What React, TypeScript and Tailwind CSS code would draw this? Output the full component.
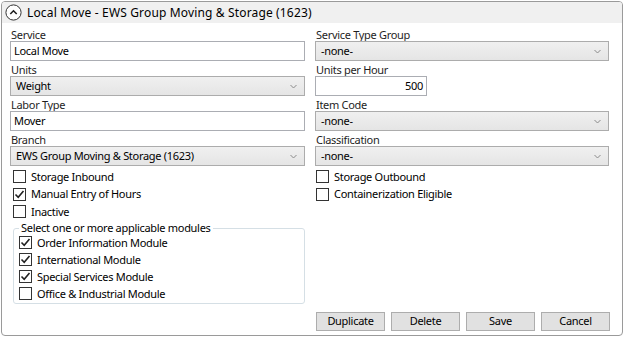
import React from "react";

const font = { fontFamily: '"Noto Sans", "Open Sans", Arial, sans-serif' };

function Label({ text }: { text: string }) {
  return <div className="h-[15px] pt-[3px] leading-[12px] text-[11px] tracking-[-0.3px] text-[#1e1e1e] pl-px">{text}</div>;
}

function TextInput({ value, right, className = "" }: { value: string; right?: boolean; className?: string }) {
  return (
    <div
      className={`h-[20px] border border-[#abadb3] bg-white flex items-center px-[3px] text-[11px] tracking-[-0.3px] text-black ${
        right ? "justify-end" : ""
      } ${className}`}
    >
      {value}
    </div>
  );
}

function Select({ value }: { value: string }) {
  return (
    <div className="h-[20px] border border-[#acacac] bg-gradient-to-b from-[#f0f0f0] to-[#e5e5e5] flex items-center justify-between pl-[5px] pr-[7px] text-[11px] tracking-[-0.3px] text-black">
      <span>{value}</span>
      <svg width="7" height="5" viewBox="0 0 7 5" className="mt-px">
        <path d="M0.5 1 L3.5 4 L6.5 1" fill="none" stroke="#8a8a8a" strokeWidth="1" />
      </svg>
    </div>
  );
}

function Check({ label, checked, tight }: { label: string; checked?: boolean; tight?: boolean }) {
  return (
    <div
      className={`${
        tight ? "h-[17px]" : "h-[17.5px]"
      } flex items-center gap-[5px] text-[11px] leading-[14px] tracking-[-0.3px] text-black`}
    >
      <div className="w-[13px] h-[13px] shrink-0 border border-[#333] bg-white flex items-center justify-center">
        {checked && (
          <svg width="11" height="11" viewBox="0 0 11 11">
            <path d="M1.5 5.5 L4.2 8.2 L9.5 2" fill="none" stroke="#212121" strokeWidth="1.6" />
          </svg>
        )}
      </div>
      <span>{label}</span>
    </div>
  );
}

function Button({ text }: { text: string }) {
  return (
    <button className="w-[69px] h-[19px] border border-[#adadad] bg-[#e1e1e1] text-[11px] tracking-[-0.3px] text-black flex items-center justify-center">
      {text}
    </button>
  );
}

export default function App() {
  return (
    <div className="w-[624px] h-[337px] bg-white p-px" style={font}>
      <div className="h-full border border-[#9a9a9a] rounded-[4px] flex flex-col overflow-hidden">
        <div className="h-[21px] bg-[#f0f0f0] flex items-center pl-[3px] gap-[5px] text-[12px] tracking-[0.15px] text-black shrink-0">
          <svg width="17" height="17" viewBox="0 0 17 17">
            <circle cx="8.5" cy="8.5" r="7.6" fill="white" stroke="#333" strokeWidth="1" />
            <path d="M5.3 10 L8.5 6.8 L11.7 10" fill="none" stroke="#222" strokeWidth="1.6" />
          </svg>
          <span>Local Move - EWS Group Moving &amp; Storage (1623)</span>
        </div>

        <div className="flex-1 flex flex-col px-[8px] pt-[3px]">
          <div className="grid grid-cols-[295px_294px] gap-x-[10px]">
            <div className="flex flex-col">
              <Label text="Service" />
              <TextInput value="Local Move" />
              <Label text="Units" />
              <Select value="Weight" />
              <Label text="Labor Type" />
              <TextInput value="Mover" />
              <Label text="Branch" />
              <Select value="EWS Group Moving & Storage (1623)" />
              <div className="flex flex-col pt-[2px] pl-[3px]">
                <Check label="Storage Inbound" />
                <Check label="Manual Entry of Hours" checked />
                <Check label="Inactive" />
              </div>
              <fieldset className="mt-[1.5px] ml-[3px] border border-[#d5dfe5] rounded-[3px] px-[5px] pb-px">
                <legend className="px-[2px] text-[11px] tracking-[-0.3px] leading-[12px] text-black">
                  Select one or more applicable modules
                </legend>
                <div className="flex flex-col">
                  <Check label="Order Information Module" checked tight />
                  <Check label="International Module" checked tight />
                  <Check label="Special Services Module" checked tight />
                  <Check label="Office & Industrial Module" tight />
                </div>
              </fieldset>
            </div>

            <div className="flex flex-col">
              <Label text="Service Type Group" />
              <Select value="-none-" />
              <Label text="Units per Hour" />
              <TextInput value="500" right className="w-[112px]" />
              <Label text="Item Code" />
              <Select value="-none-" />
              <Label text="Classification" />
              <Select value="-none-" />
              <div className="flex flex-col pt-[2px] pl-px">
                <Check label="Storage Outbound" />
                <Check label="Containerization Eligible" />
              </div>
            </div>
          </div>

          <div className="mt-auto flex justify-end gap-[6px] pr-[4px] pb-[4px]">
            <Button text="Duplicate" />
            <Button text="Delete" />
            <Button text="Save" />
            <Button text="Cancel" />
          </div>
        </div>
      </div>
    </div>
  );
}
